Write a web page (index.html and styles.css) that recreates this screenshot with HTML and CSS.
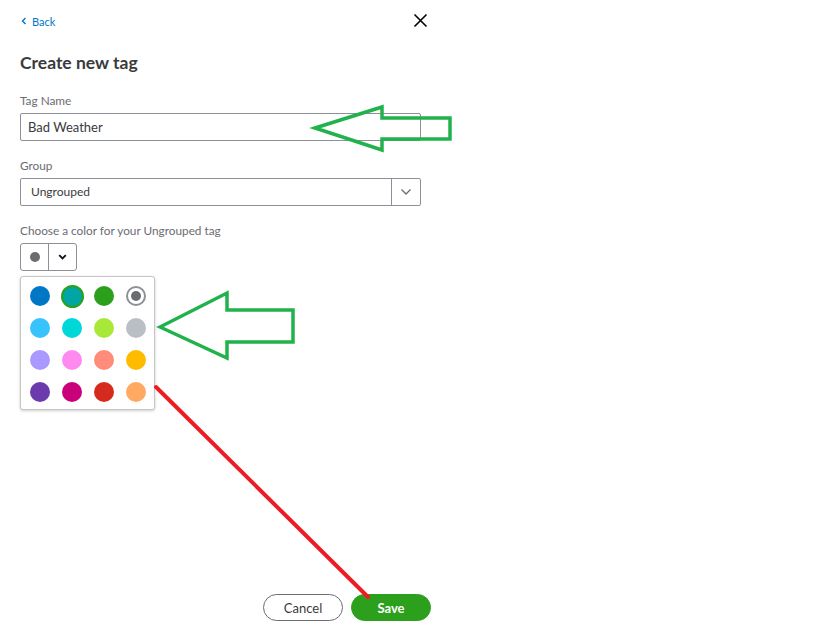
FILE: index.html
```html
<!DOCTYPE html>
<html lang="en">
<head>
<meta charset="utf-8">
<title>Create new tag</title>
<link rel="stylesheet" href="styles.css">
</head>
<body>
<div class="page">
  <div class="top-bar">
    <a class="back" href="#">
      <svg class="back-icon" width="6" height="8" viewBox="0 0 6 8"><path d="M4.5 1 L1.5 4 L4.5 7" fill="none" stroke="#0077c5" stroke-width="1.4"/></svg>
      <span>Back</span>
    </a>
    <svg class="close" width="15" height="15" viewBox="0 0 15 15"><path d="M1.5 1.5 L13.5 13.5 M13.5 1.5 L1.5 13.5" stroke="#000" stroke-width="1.6" fill="none"/></svg>
  </div>
  <h1 class="title">Create new tag</h1>

  <div class="field">
    <label class="label">Tag Name</label>
    <div class="input">Bad Weather</div>
  </div>

  <div class="field">
    <label class="label">Group</label>
    <div class="select">
      <span class="select-text">Ungrouped</span>
      <span class="select-btn">
        <svg width="12" height="8" viewBox="0 0 12 8"><path d="M1.5 1.5 L6 6 L10.5 1.5" fill="none" stroke="#6b6c72" stroke-width="1.3"/></svg>
      </span>
    </div>
  </div>

  <div class="field">
    <label class="label">Choose a color for your Ungrouped tag</label>
    <div class="color-wrap">
      <div class="color-btn">
        <span class="color-cell"><span class="dot"></span></span>
        <span class="color-cell">
          <svg width="9" height="6" viewBox="0 0 9 6"><path d="M1.2 1.2 L4.5 4.5 L7.8 1.2" fill="none" stroke="#111" stroke-width="1.8"/></svg>
        </span>
      </div>
      <div class="popover">
        <span class="swatch" style="background:#0077c5"></span>
        <span class="swatch selected" style="background:#00a5a4"></span>
        <span class="swatch" style="background:#2ca01c"></span>
        <span class="swatch none"><span class="none-dot"></span></span>
        <span class="swatch" style="background:#38c3fc"></span>
        <span class="swatch" style="background:#00d8d8"></span>
        <span class="swatch" style="background:#a9e838"></span>
        <span class="swatch" style="background:#babec5"></span>
        <span class="swatch" style="background:#aa99ff"></span>
        <span class="swatch" style="background:#ff8aef"></span>
        <span class="swatch" style="background:#ff8c7a"></span>
        <span class="swatch" style="background:#ffbb00"></span>
        <span class="swatch" style="background:#6b3aac"></span>
        <span class="swatch" style="background:#c9007a"></span>
        <span class="swatch" style="background:#d52b1e"></span>
        <span class="swatch" style="background:#ffa962"></span>
      </div>
    </div>
  </div>

  <div class="footer">
    <button class="btn cancel">Cancel</button>
    <button class="btn save">Save</button>
  </div>
</div>

<svg class="annotations" width="819" height="633" viewBox="0 0 819 633">
  <polygon points="315,128 382,107 382,118 450,118 450,139 382,139 382,150" fill="none" stroke="#22b24c" stroke-width="3.5" stroke-linejoin="miter"/>
  <polygon points="160,327 227,293 227,310 293,310 293,342 227,342 227,358" fill="none" stroke="#22b24c" stroke-width="3.5" stroke-linejoin="miter"/>
  <line x1="156" y1="387" x2="368" y2="597" stroke="#ec1c24" stroke-width="4" stroke-linecap="round"/>
</svg>
</body>
</html>
```

FILE: styles.css
```css
html, body {
  margin: 0;
  padding: 0;
  background: #fff;
}
body {
  font-family: Lato, "Open Sans", sans-serif;
  color: #393a3d;
  width: 819px;
  height: 633px;
  overflow: hidden;
  position: relative;
}
.page {
  width: 441px;
  height: 633px;
  box-sizing: border-box;
  padding: 0 20px 12px 20px;
  display: flex;
  flex-direction: column;
}
.top-bar {
  height: 42px;
  display: flex;
  align-items: center;
  justify-content: space-between;
  margin-right: -7px;
}
.back {
  display: flex;
  align-items: center;
  gap: 5px;
  color: #0077c5;
  text-decoration: none;
  font-size: 11px;
  margin-left: 1px;
}
.close {
  margin-top: -1px;
}
.title {
  margin: 11px 0 0 0;
  font-size: 17.5px;
  line-height: 20px;
  font-weight: 700;
  color: #393a3d;
}
.field {
  display: flex;
  flex-direction: column;
  margin-top: 17px;
}
.title + .field {
  margin-top: 20px;
}
.label {
  font-size: 11.8px;
  line-height: 16px;
  color: #6b6c72;
  margin-bottom: 4px;
}
.input {
  height: 28px;
  box-sizing: border-box;
  border: 1px solid #8d9096;
  border-radius: 2px;
  font-size: 13px;
  line-height: 26px;
  padding-left: 7px;
  color: #393a3d;
}
.select {
  height: 28px;
  box-sizing: border-box;
  border: 1px solid #8d9096;
  border-radius: 2px;
  display: flex;
  align-items: stretch;
}
.select-text {
  flex: 1;
  font-size: 12px;
  line-height: 26px;
  padding-left: 10px;
}
.select-btn {
  width: 28px;
  border-left: 1px solid #8d9096;
  display: flex;
  align-items: center;
  justify-content: center;
}
.color-wrap {
  position: relative;
}
.color-btn {
  width: 57px;
  height: 28px;
  box-sizing: border-box;
  border: 1px solid #8d9096;
  border-radius: 3px;
  display: flex;
}
.color-cell {
  flex: 1;
  display: flex;
  align-items: center;
  justify-content: center;
}
.color-cell + .color-cell {
  border-left: 1px solid #8d9096;
}
.dot {
  width: 10px;
  height: 10px;
  border-radius: 50%;
  background: #6b6c72;
}
.popover {
  position: absolute;
  left: 0;
  top: 33px;
  width: 135px;
  height: 134px;
  box-sizing: border-box;
  border: 1px solid #c5c6ca;
  border-radius: 3px;
  background: #fff;
  box-shadow: 0 1px 3px rgba(0,0,0,0.2);
  padding: 9px 8px 0 9px;
  display: grid;
  grid-template-columns: repeat(4, 20px);
  grid-auto-rows: 20px;
  column-gap: 12px;
  row-gap: 12px;
  align-content: start;
  z-index: 2;
}
.swatch {
  width: 20px;
  height: 20px;
  border-radius: 50%;
  box-sizing: border-box;
}
.swatch.selected {
  width: 23px;
  height: 23px;
  margin: -1.5px;
  border: 2px solid #2ca01c;
}
.swatch.none {
  border: 2px solid #8d9096;
  background: #fff;
  display: flex;
  align-items: center;
  justify-content: center;
}
.none-dot {
  width: 10px;
  height: 10px;
  border-radius: 50%;
  background: #6b6c72;
}
.footer {
  margin-top: auto;
  display: flex;
  justify-content: flex-end;
  gap: 8px;
  margin-right: -10px;
}
.btn {
  width: 80px;
  height: 27px;
  border-radius: 14px;
  font-family: Lato, "Open Sans", sans-serif;
  font-size: 13px;
  padding: 0;
  box-sizing: border-box;
  cursor: pointer;
}
.cancel {
  background: #fff;
  border: 1px solid #6b6c72;
  color: #393a3d;
}
.save {
  background: #2ca01c;
  border: 1px solid #2ca01c;
  color: #fff;
  font-weight: 700;
}
.annotations {
  position: absolute;
  left: 0;
  top: 0;
  pointer-events: none;
  z-index: 5;
}
```
